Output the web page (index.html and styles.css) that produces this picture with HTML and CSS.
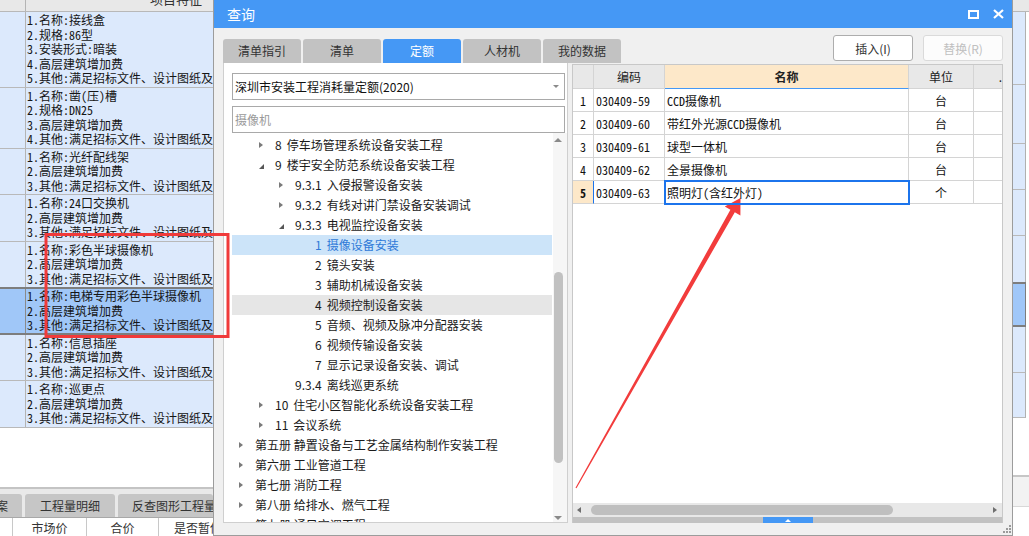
FILE: index.html
```html
<!DOCTYPE html>
<html lang="zh-CN">
<head>
<meta charset="utf-8">
<title>查询</title>
<link rel="stylesheet" href="styles.css">
</head>
<body>
<div class="app">
  <section class="pane-left">
    <div class="ghead"><div class="gidx"></div><div class="gcap"><span>项目特征</span></div></div>
    <div class="grow"><div class="gidx"></div><div class="gfeat mono"><p>1.名称:接线盒</p><p>2.规格:86型</p><p>3.安装形式:暗装</p><p>4.高层建筑增加费</p><p>5.其他:满足招标文件、设计图纸及</p></div></div>
    <div class="grow"><div class="gidx"></div><div class="gfeat mono"><p>1.名称:凿(压)槽</p><p>2.规格:DN25</p><p>3.高层建筑增加费</p><p>4.其他:满足招标文件、设计图纸及</p></div></div>
    <div class="grow"><div class="gidx"></div><div class="gfeat mono"><p>1.名称:光纤配线架</p><p>2.高层建筑增加费</p><p>3.其他:满足招标文件、设计图纸及</p></div></div>
    <div class="grow"><div class="gidx"></div><div class="gfeat mono"><p>1.名称:24口交换机</p><p>2.高层建筑增加费</p><p>3.其他:满足招标文件、设计图纸及</p></div></div>
    <div class="grow"><div class="gidx"></div><div class="gfeat mono"><p>1.名称:彩色半球摄像机</p><p>2.高层建筑增加费</p><p>3.其他:满足招标文件、设计图纸及</p></div></div>
    <div class="grow sel"><div class="gidx"></div><div class="gfeat mono"><p>1.名称:电梯专用彩色半球摄像机</p><p>2.高层建筑增加费</p><p>3.其他:满足招标文件、设计图纸及</p></div></div>
    <div class="grow"><div class="gidx"></div><div class="gfeat mono"><p>1.名称:信息插座</p><p>2.高层建筑增加费</p><p>3.其他:满足招标文件、设计图纸及</p></div></div>
    <div class="grow"><div class="gidx"></div><div class="gfeat mono"><p>1.名称:巡更点</p><p>2.高层建筑增加费</p><p>3.其他:满足招标文件、设计图纸及</p></div></div>
    <div class="gblank"></div>
    <div class="btabs">
      <div class="btab bt1">案</div>
      <div class="btab bt2">工程量明细</div>
      <div class="btab bt3">反查图形工程量</div>
    </div>
    <div class="bhead">
      <div class="bc bc0"></div>
      <div class="bc bc1">市场价</div>
      <div class="bc bc2">合价</div>
      <div class="bc bc3">是否暂估</div>
    </div>
  </section>
  <div class="pane-mid"></div>
  <section class="pane-right">
    <div class="rhead"></div>
    <div class="rrow h73"></div>
    <div class="rrow h59"></div>
    <div class="rrow h46"></div>
    <div class="rrow h46"></div>
    <div class="rrow h47"></div>
    <div class="rrow sel h45"></div>
    <div class="rrow h46"></div>
    <div class="rrow h45"></div>
    <div class="rblank"></div>
    <div class="rfoot"></div>
    <div class="rrest"></div>
  </section>
</div>

<div class="dlg">
  <header class="dlg-title">
    <span class="dlg-name">查询</span>
    <span class="dlg-btns">
      <svg width="11" height="9" viewBox="0 0 11 9"><rect x="1" y="1" width="9" height="7" fill="none" stroke="#fff" stroke-width="2"/></svg>
      <svg width="11" height="10" viewBox="0 0 11 10"><path d="M1 1 L10 9 M10 1 L1 9" stroke="#fff" stroke-width="2.2" fill="none"/></svg>
    </span>
  </header>
  <div class="dlg-body">
    <div class="tabs">
      <div class="tab">清单指引</div>
      <div class="tab">清单</div>
      <div class="tab active">定额</div>
      <div class="tab">人材机</div>
      <div class="tab">我的数据</div>
    </div>
    <div class="actions">
      <button class="btn">插入(I)</button>
      <button class="btn off">替换(R)</button>
    </div>

    <div class="lpanel">
      <div class="combo"><span>深圳市安装工程消耗量定额(2020)</span><i class="caret"></i></div>
      <div class="search">摄像机</div>
      <div class="tree">
        <div class="tlist">
          <div class="ti l1"><span class="tw"><i class="arr-r"></i></span><span class="tn">8</span><span>停车场管理系统设备安装工程</span></div>
          <div class="ti l1"><span class="tw"><i class="arr-d"></i></span><span class="tn">9</span><span>楼宇安全防范系统设备安装工程</span></div>
          <div class="ti l2"><span class="tw"><i class="arr-r"></i></span><span class="tn">9.3.1</span><span>入侵报警设备安装</span></div>
          <div class="ti l2"><span class="tw"><i class="arr-r"></i></span><span class="tn">9.3.2</span><span>有线对讲门禁设备安装调试</span></div>
          <div class="ti l2"><span class="tw"><i class="arr-d"></i></span><span class="tn">9.3.3</span><span>电视监控设备安装</span></div>
          <div class="ti l3 sel"><span class="tw"></span><span class="tn">1</span><span>摄像设备安装</span></div>
          <div class="ti l3"><span class="tw"></span><span class="tn">2</span><span>镜头安装</span></div>
          <div class="ti l3"><span class="tw"></span><span class="tn">3</span><span>辅助机械设备安装</span></div>
          <div class="ti l3 hov"><span class="tw"></span><span class="tn">4</span><span>视频控制设备安装</span></div>
          <div class="ti l3"><span class="tw"></span><span class="tn">5</span><span>音频、视频及脉冲分配器安装</span></div>
          <div class="ti l3"><span class="tw"></span><span class="tn">6</span><span>视频传输设备安装</span></div>
          <div class="ti l3"><span class="tw"></span><span class="tn">7</span><span>显示记录设备安装、调试</span></div>
          <div class="ti l2"><span class="tw"></span><span class="tn">9.3.4</span><span>离线巡更系统</span></div>
          <div class="ti l1"><span class="tw"><i class="arr-r"></i></span><span class="tn">10</span><span>住宅小区智能化系统设备安装工程</span></div>
          <div class="ti l1"><span class="tw"><i class="arr-r"></i></span><span class="tn">11</span><span>会议系统</span></div>
          <div class="ti l0"><span class="tw"><i class="arr-r"></i></span><span>第五册 静置设备与工艺金属结构制作安装工程</span></div>
          <div class="ti l0"><span class="tw"><i class="arr-r"></i></span><span>第六册 工业管道工程</span></div>
          <div class="ti l0"><span class="tw"><i class="arr-r"></i></span><span>第七册 消防工程</span></div>
          <div class="ti l0"><span class="tw"><i class="arr-r"></i></span><span>第八册 给排水、燃气工程</span></div>
          <div class="ti l0"><span class="tw"><i class="arr-r"></i></span><span>第九册 通风空调工程</span></div>
        </div>
        <div class="vscroll">
          <i class="sc-up"></i>
          <div class="vthumb"></div>
          <i class="sc-down"></i>
        </div>
      </div>
    </div>

    <div class="rpanel">
      <div class="tbl">
        <div class="th"></div>
        <div class="th">编码</div>
        <div class="th name">名称</div>
        <div class="th">单位</div>
        <div class="th last"><span>.</span></div>

        <div class="td num mono">1</div>
        <div class="td code mono">030409-59</div>
        <div class="td nm mono">CCD摄像机</div>
        <div class="td unit mono">台</div>
        <div class="td last"></div>

        <div class="td num mono">2</div>
        <div class="td code mono">030409-60</div>
        <div class="td nm mono">带红外光源CCD摄像机</div>
        <div class="td unit mono">台</div>
        <div class="td last"></div>

        <div class="td num mono">3</div>
        <div class="td code mono">030409-61</div>
        <div class="td nm mono">球型一体机</div>
        <div class="td unit mono">台</div>
        <div class="td last"></div>

        <div class="td num mono">4</div>
        <div class="td code mono">030409-62</div>
        <div class="td nm mono">全景摄像机</div>
        <div class="td unit mono">台</div>
        <div class="td last"></div>

        <div class="td num cur-row mono">5</div>
        <div class="td code mono">030409-63</div>
        <div class="td nm cur mono">照明灯(含红外灯)</div>
        <div class="td unit mono">个</div>
        <div class="td last"></div>
      </div>
      <div class="tfill"></div>
      <div class="hscroll">
        <i class="sc-left"></i>
        <div class="hthumb"></div>
        <i class="sc-right"></i>
      </div>
      <div class="split"><span class="split-handle"><i></i></span></div>
    </div>
  </div>
  <footer class="dlg-foot">
    <svg width="9" height="9" viewBox="0 0 9 9" fill="#9a9a9a"><rect x="7" y="1" width="2" height="2"/><rect x="4" y="4" width="2" height="2"/><rect x="7" y="4" width="2" height="2"/><rect x="1" y="7" width="2" height="2"/><rect x="4" y="7" width="2" height="2"/><rect x="7" y="7" width="2" height="2"/></svg>
  </footer>
</div>

<svg class="marks" width="1029" height="536" viewBox="0 0 1029 536">
  <rect x="46" y="234.5" width="182" height="102" fill="none" stroke="#f03a3a" stroke-width="3"/>
  <polygon points="575.5,487.7 730.4,209.8 724.8,206.6 740.5,198 740.4,215.4 734.8,212.2 576.5,488.3" fill="#f23c3c"/>
</svg>
</body>
</html>
```

FILE: styles.css
```css
* { box-sizing: border-box; margin: 0; padding: 0; }
html, body { width: 1029px; height: 536px; overflow: hidden; }
body {
  position: relative;
  font-family: "Noto Sans CJK SC", "Noto Sans", sans-serif;
  font-size: 12px;
  color: #222;
  background: #fff;
}
.mono { font-family: "Noto Sans Mono CJK SC", "Liberation Mono", "Noto Sans CJK SC", monospace; }

/* ---------- background application ---------- */
.app { display: flex; height: 536px; }
.pane-left { width: 213px; flex: none; display: flex; flex-direction: column; overflow: hidden; background: #fff; }
.pane-mid { flex: 1; }
.pane-right { width: 16px; flex: none; display: flex; flex-direction: column; background: #fff; }

.ghead { display: flex; height: 12px; flex: none; background: #e8e8e8; border-bottom: 1px solid #b8b8b8; overflow: hidden; }
.gidx { width: 26px; flex: none; border-right: 1px solid #b4b4b4; }
.gcap { flex: 1; overflow: hidden; }
.gcap span { display: block; margin: -9px 0 0 124px; line-height: 16px; font-size: 13px; color: #333; white-space: nowrap; }

.grow { display: flex; flex: none; background: #dce9fc; border-bottom: 1px solid #b9b9b9; }
.gfeat { padding: 1px 0 1px 1px; font-size: 12px; white-space: nowrap; color: #151515; }
.gfeat p { height: 14.5px; line-height: 14.5px; }
.grow.sel { background: #a0c7f8; border-top: 2px solid #7d7d7d; border-bottom: 2px solid #7d7d7d; margin-top: -1px; }
.grow.sel .gfeat { padding: 0 0 0 1px; }
.grow.sel .gidx { border-right-color: #8a8a8a; }

.gblank { flex: 1; }
.btabs { flex: none; height: 30px; display: flex; align-items: flex-end; gap: 3px; background: #e9e9e9; border-top: 2px solid #c4c4c4; }
.btab { height: 23px; background: #c6c6c6; border-radius: 3px 3px 0 0; display: flex; align-items: center; white-space: nowrap; overflow: hidden; color: #333; font-size: 12px; flex: none; }
.bt1 { width: 22px; justify-content: flex-end; padding-right: 14px; border-radius: 0 3px 0 0; }
.bt2 { width: 90px; justify-content: center; }
.bt3 { width: 95px; padding-left: 14px; }
.bhead { flex: none; height: 19px; display: flex; background: #fff; border-top: 1px solid #a8a8a8; }
.bc { height: 18px; display: flex; align-items: center; justify-content: center; border-right: 1px solid #c8c8c8; color: #333; white-space: nowrap; overflow: hidden; flex: none; }
.bc0 { width: 13px; }
.bc1 { width: 74px; }
.bc2 { width: 72px; }
.bc3 { width: 54px; border-right: 0; justify-content: flex-start; padding-left: 15px; }

.rhead { height: 12px; flex: none; background: #e8e8e8; border-bottom: 1px solid #b8b8b8; }
.rrow { width: 13px; flex: none; background: #dce9fc; border-bottom: 1px solid #b9b9b9; border-right: 1px solid #b0b0b0; }
.rrow.sel { background: #a0c7f8; border-top: 2px solid #7d7d7d; border-bottom: 2px solid #7d7d7d; border-right-color: #7d7d7d; margin-top: -1px; }
.h73 { height: 73px; }
.h59 { height: 59px; }
.h47 { height: 47px; }
.h46 { height: 46px; }
.h45 { height: 45px; }
.rblank { flex: 1; }
.rfoot { height: 32px; flex: none; background: #f2f2f2; border-top: 2px solid #c6c6c6; border-bottom: 1px solid #d8d8d8; }
.rrest { height: 29px; flex: none; }

/* ---------- dialog window ---------- */
.dlg {
  position: absolute; left: 213px; top: 0;
  width: 800px; height: 536px;
  background: #f0f0f0;
  border: 1px solid #9c9c9c; border-top: 0;
  display: flex; flex-direction: column;
}
.dlg-title { height: 28px; flex: none; background: #4598f5; color: #fff; display: flex; align-items: center; justify-content: space-between; padding: 0 8px 0 13px; }
.dlg-name { font-size: 14px; line-height: 28px; }
.dlg-btns { display: flex; align-items: center; gap: 14px; height: 28px; }
.dlg-btns svg { display: block; }

.dlg-body { flex: none; height: 495px; display: grid; grid-template-columns: 345px 431px; grid-template-rows: 35px 460px; column-gap: 4px; padding: 0 9px; }

.tabs { grid-row: 1; grid-column: 1; align-self: end; justify-self: start; display: flex; gap: 2px; width: max-content; }
.tab { width: 78px; height: 24px; line-height: 24px; text-align: center; background: #c2c2c2; color: #333; border-radius: 3px 3px 0 0; font-size: 12px; }
.tab.active { background: #4598f5; color: #fff; }

.actions { grid-row: 1; grid-column: 2; display: flex; justify-content: flex-end; align-items: flex-start; gap: 10px; padding-top: 7px; }
.btn { width: 80px; height: 26px; background: #fff; border: 1px solid #adadad; border-radius: 3px; font-family: inherit; font-size: 12px; color: #333; }
.btn.off { color: #c0c0c0; border-color: #dadada; background: #fcfcfc; }

.lpanel { grid-row: 2; grid-column: 1; background: #fff; border: 1px solid #cfcfcf; border-top: 0; display: flex; flex-direction: column; min-height: 0; }
.combo { flex: none; margin: 10px 2px 0 8px; height: 27px; border: 1px solid #a9a9a9; background: #fff; display: flex; align-items: center; justify-content: space-between; padding: 0 5px 0 2px; color: #111; }
.caret { width: 0; height: 0; border-left: 3px solid transparent; border-right: 3px solid transparent; border-top: 3px solid #8a8a8a; }
.search { flex: none; margin: 6px 2px 0 8px; height: 27px; border: 1px solid #a9a9a9; padding-left: 2px; line-height: 25px; color: #9a9a9a; }

.tree { flex: 1; display: flex; min-height: 0; overflow: hidden; }
.tlist { flex: 1; padding: 2px 1px 0 8px; overflow: hidden; }
.ti { height: 20px; line-height: 20px; display: flex; align-items: center; white-space: nowrap; color: #1b1b1b; overflow: hidden; }
.ti.l1 { padding-left: 20px; }
.ti.l2 { padding-left: 40px; }
.ti.l3 { padding-left: 60px; }
.ti.sel { background: #cce4f9; color: #2f7ad8; }
.ti.hov { background: #e6e6e6; }
.tw { width: 23px; flex: none; display: flex; align-items: center; padding-left: 7px; height: 20px; }
.tn { margin-right: 5px; }
.arr-r { display: block; width: 0; height: 0; border-left: 4px solid #7a7a7a; border-top: 3.5px solid transparent; border-bottom: 3.5px solid transparent; }
.arr-d { display: block; width: 0; height: 0; border-bottom: 5px solid #575757; border-left: 5px solid transparent; margin-top: 2px; }

.vscroll { width: 14px; flex: none; display: flex; flex-direction: column; align-items: flex-start; padding-left: 1px; background: #f6f6f6; }
.sc-up { display: block; width: 0; height: 0; margin-top: 5px; border-left: 4px solid transparent; border-right: 4px solid transparent; border-bottom: 4px solid #8a8a8a; }
.vthumb { width: 9px; height: 191px; margin-top: 130px; border-radius: 5px; background: #c1c1c1; }
.sc-down { display: block; width: 0; height: 0; margin-top: auto; margin-bottom: 2px; border-left: 4px solid transparent; border-right: 4px solid transparent; border-top: 4px solid #8a8a8a; }

.rpanel { grid-row: 2; grid-column: 2; margin-top: 1px; background: #fff; border: 1px solid #c8c8c8; border-bottom: 0; display: flex; flex-direction: column; min-height: 0; }
.tbl { flex: none; display: grid; grid-template-columns: 21px 71px 244px 65px 1fr; grid-template-rows: 24px repeat(5, 23px); }
.th, .td { border-right: 1px solid #d4d4d4; border-bottom: 1px solid #d4d4d4; display: flex; align-items: center; white-space: nowrap; overflow: hidden; }
.th { background: #e8e8e8; justify-content: center; color: #222; font-size: 12px; }
.th.name { background: #fde8c9; font-weight: bold; border-bottom-color: #4598f5; }
.th.last, .td.last { border-right: 0; }
.th.last { justify-content: flex-end; }
.td { font-size: 12px; color: #111; }
.td.num { justify-content: center; }
.td.code, .td.nm { padding-left: 2px; }
.td.unit { justify-content: center; }
.td.cur-row { background: #fde8c9; font-weight: bold; border-right: 1px solid #1c74ec; }
.td.cur { position: relative; z-index: 1; outline: 2px solid #1c74ec; outline-offset: -1px; }

.tfill { flex: 1; }
.hscroll { flex: none; height: 14px; background: #e8e8e8; display: flex; align-items: center; padding: 0 4px 0 4px; }
.sc-left { display: block; width: 0; height: 0; border-right: 4px solid #6e6e6e; border-top: 3.5px solid transparent; border-bottom: 3.5px solid transparent; }
.hthumb { width: 302px; height: 10px; margin-left: 10px; border-radius: 5px; background: #bfbfbf; }
.sc-right { display: block; width: 0; height: 0; margin-left: auto; margin-right: 1px; border-left: 4px solid #6e6e6e; border-top: 3.5px solid transparent; border-bottom: 3.5px solid transparent; }
.split { flex: none; height: 6px; background: #c2c2c2; display: flex; justify-content: center; }
.split-handle { width: 50px; height: 6px; background: #4598f5; display: flex; justify-content: center; align-items: center; }
.split-handle i { display: block; width: 0; height: 0; border-left: 3px solid transparent; border-right: 3px solid transparent; border-bottom: 3px solid #fff; }

.dlg-foot { flex: none; height: 12px; display: flex; justify-content: flex-end; align-items: flex-end; padding: 0 1px 2px 0; }
.dlg-foot svg { display: block; }

/* ---------- annotation overlay ---------- */
.marks { position: absolute; left: 0; top: 0; pointer-events: none; }
```
